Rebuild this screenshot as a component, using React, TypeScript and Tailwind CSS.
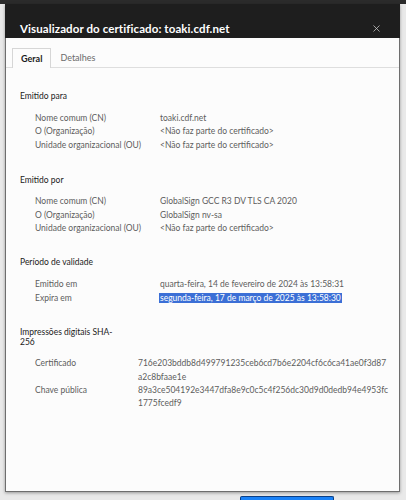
import { X } from 'lucide-react';

type Row = { label: string; value: string[]; selected?: boolean };

const issuedTo: Row[] = [
  { label: 'Nome comum (CN)', value: ['toaki.cdf.net'] },
  { label: 'O (Organização)', value: ['<Não faz parte do certificado>'] },
  { label: 'Unidade organizacional (OU)', value: ['<Não faz parte do certificado>'] },
];

const issuedBy: Row[] = [
  { label: 'Nome comum (CN)', value: ['GlobalSign GCC R3 DV TLS CA 2020'] },
  { label: 'O (Organização)', value: ['GlobalSign nv-sa'] },
  { label: 'Unidade organizacional (OU)', value: ['<Não faz parte do certificado>'] },
];

const validity: Row[] = [
  { label: 'Emitido em', value: ['quarta-feira, 14 de fevereiro de 2024 às 13:58:31'] },
  { label: 'Expira em', value: ['segunda-feira, 17 de março de 2025 às 13:58:30'], selected: true },
];

const fingerprints: Row[] = [
  { label: 'Certificado', value: ['716e203bddb8d499791235ceb6cd7b6e2204cf6c6ca41ae0f3d87', 'a2c8bfaae1e'] },
  { label: 'Chave pública', value: ['89a3ce504192e3447dfa8e9c0c5c4f256dc30d9d0dedb94e4953fc', '1775fcedf9'] },
];

function Rows({ rows, labelWidth }: { rows: Row[]; labelWidth: string }) {
  return (
    <div className="pl-[15px]">
      {rows.map((row) => (
        <div key={row.label} className="flex leading-[13.4px]">
          <div className={`${labelWidth} shrink-0`}>{row.label}</div>
          <div>
            {row.value.map((line) =>
              row.selected ? (
                <span key={line} className="bg-[#3b6fd6] text-white px-[1px] -ml-[1px] leading-[10px] inline-block">
                  {line}
                </span>
              ) : (
                <div key={line}>{line}</div>
              )
            )}
          </div>
        </div>
      ))}
    </div>
  );
}

export default function App() {
  return (
    <div
      className="w-[406px] h-[500px] overflow-hidden bg-[#e9e9e9] text-[8.5px] text-[#5c5c5c]"
      style={{ fontFamily: 'Lato, "Noto Sans", sans-serif' }}
    >
      <div className="h-[4px] bg-[#2b2b2b]" />

      {/* Dialog */}
      <div className="ml-[5px] w-[395px] shadow-[0_1px_3px_rgba(0,0,0,0.35)]">
        <div className="h-[34px] bg-[#1e1e1e] flex items-start justify-between pl-[15px] pr-[18px] pt-[18px]">
          <span className="text-white text-[11.5px] font-bold leading-[14px] tracking-[0.1px]">
            Visualizador do certificado: toaki.cdf.net
          </span>
          <X size={11} strokeWidth={1.6} className="text-[#cfcfcf] mt-[1px]" />
        </div>

        <div className="h-[454px] bg-[#fcfcfc] border-x border-b border-[#6e6e6e]">
          {/* Tabs */}
          <div className="pt-[10px] flex border-b border-[#dedede] pl-[6px]">
            <div className="h-[20px] -mb-[1px] px-[8px] flex items-center border border-b-0 border-[#d6d6d6] bg-[#fcfcfc] text-[#1b1b1b] font-bold text-[9px]">
              Geral
            </div>
            <div className="h-[19px] px-[9px] flex items-center text-[#6b6b6b] text-[9px]">Detalhes</div>
          </div>

          <div className="pl-[14px]">
            <div className="mt-[22px] text-[#1b1b1b] leading-[13px]">Emitido para</div>
            <div className="mt-[9px]">
              <Rows rows={issuedTo} labelWidth="w-[125px]" />
            </div>

            <div className="mt-[22px] text-[#1b1b1b] leading-[13px]">Emitido por</div>
            <div className="mt-[8px]">
              <Rows rows={issuedBy} labelWidth="w-[125px]" />
            </div>

            <div className="mt-[21px] text-[#1b1b1b] leading-[13px]">Período de validade</div>
            <div className="mt-[9px]">
              <Rows rows={validity} labelWidth="w-[125px]" />
            </div>

            <div className="mt-[22px] text-[#1b1b1b] leading-[10px]">
              <div>Impressões digitais SHA-</div>
              <div>256</div>
            </div>
            <div className="mt-[10px]">
              <Rows rows={fingerprints} labelWidth="w-[103px]" />
            </div>
          </div>
        </div>
      </div>

      {/* Button peeking below the dialog */}
      <div className="ml-[240px] mt-[4px] w-[94px] h-[6px] bg-[#1a82f7] border-t border-x border-[#0b3f85] rounded-t-[2px]" />
    </div>
  );
}
